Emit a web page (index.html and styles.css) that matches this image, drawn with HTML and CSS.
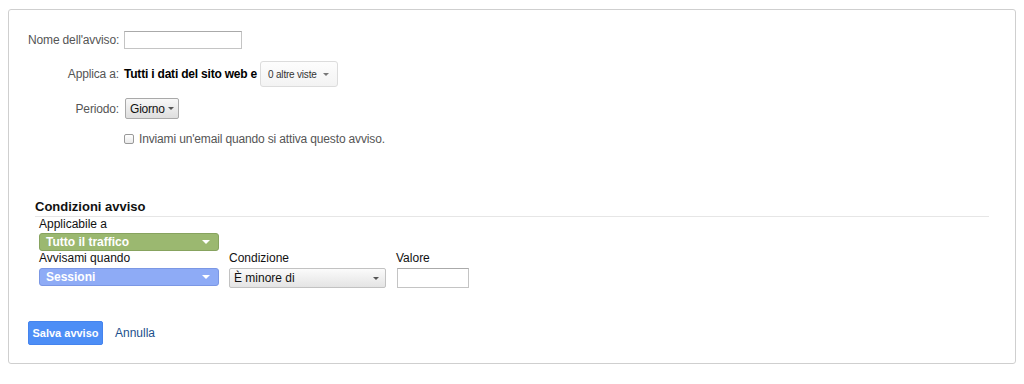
FILE: index.html
```html
<!DOCTYPE html>
<html lang="it">
  <head>
    <meta charset="UTF-8" />
    <meta name="viewport" content="width=device-width, initial-scale=1.0" />
    <title>Nuovo avviso</title>
    <link rel="stylesheet" href="styles.css">
  </head>
  <body>
    <div class="card">
      <div class="form-row row-name">
        <label class="form-label">Nome dell'avviso:</label>
        <input type="text" class="text-box name-box" />
      </div>
      <div class="form-row row-apply">
        <span class="form-label">Applica a:</span>
        <strong class="site-text">Tutti i dati del sito web e</strong>
        <div class="views-btn">
          <span>0 altre viste</span>
          <span class="caret caret-gray"></span>
        </div>
      </div>
      <div class="form-row row-period">
        <span class="form-label">Periodo:</span>
        <div class="period-btn">
          <span>Giorno</span>
          <span class="caret caret-small"></span>
        </div>
      </div>
      <div class="form-row row-mail">
        <span class="form-label"></span>
        <span class="check"></span>
        <span class="mail-text">Inviami un'email quando si attiva questo avviso.</span>
      </div>

      <div class="conditions">
        <h3 class="cond-title">Condizioni avviso</h3>
        <div class="cond-body">
          <div class="cond-label">Applicabile a</div>
          <div class="pill pill-green">
            <span>Tutto il traffico</span>
            <span class="caret caret-white"></span>
          </div>
          <div class="cond-grid">
            <div class="cond-label">Avvisami quando</div>
            <div class="cond-label">Condizione</div>
            <div class="cond-label">Valore</div>
            <div class="pill pill-blue">
              <span>Sessioni</span>
              <span class="caret caret-white"></span>
            </div>
            <div class="select-box">
              <span>È minore di</span>
              <span class="caret caret-dark"></span>
            </div>
            <input type="text" class="text-box value-box" />
          </div>
        </div>
      </div>

      <div class="actions">
        <button class="save-btn">Salva avviso</button>
        <a href="#" class="cancel-link">Annulla</a>
      </div>
    </div>
  </body>
</html>
```

FILE: styles.css
```css
body {
  margin: 9px 8px 0;
  font-family: "Liberation Sans", Arial, sans-serif;
  font-size: 12px;
  color: #222;
  background: #fff;
}

.card {
  border: 1px solid #cfcfcf;
  border-radius: 3px;
  padding: 21px 26px 17px 19px;
  height: 315px;
  box-sizing: content-box;
}

.form-row {
  display: flex;
  align-items: center;
}

.form-label {
  width: 91px;
  text-align: right;
  color: #555;
  margin-right: 5px;
  flex-shrink: 0;
  white-space: nowrap;
  letter-spacing: -0.15px;
}

.row-name {
  height: 18px;
  margin-bottom: 12px;
}

.row-apply {
  height: 26px;
  margin-bottom: 11px;
}

.row-period {
  height: 21px;
  margin-bottom: 12px;
}

.row-mail {
  height: 16px;
}

.text-box {
  box-sizing: border-box;
  border: 1px solid #c4c4c4;
  border-top-color: #aaa;
  margin: 0;
  padding: 2px 4px;
  outline: none;
}

.name-box {
  width: 118px;
  height: 18px;
}

.site-text {
  color: #000;
  font-weight: bold;
  margin-right: 3px;
  letter-spacing: -0.2px;
}

.views-btn {
  display: flex;
  align-items: center;
  justify-content: space-between;
  box-sizing: border-box;
  width: 78px;
  height: 26px;
  padding: 0 8px 0 7px;
  border: 1px solid #dcdcdc;
  border-radius: 3px;
  background: linear-gradient(#fdfdfd, #f3f3f3);
  font-size: 10px;
  letter-spacing: -0.2px;
  color: #333;
}

.period-btn {
  display: flex;
  align-items: center;
  box-sizing: border-box;
  height: 21px;
  margin-left: 1px;
  padding: 0 4px 0 4px;
  border: 1px solid #a9a9a9;
  border-radius: 2px;
  background: linear-gradient(#f8f8f8, #dedede);
  color: #111;
  letter-spacing: -0.2px;
}

.period-btn .caret {
  margin-left: 3px;
}

.caret {
  display: inline-block;
  width: 0;
  height: 0;
  border-left: 4px solid transparent;
  border-right: 4px solid transparent;
  border-top: 4px solid #fff;
}

.caret-gray {
  border-top-color: #777;
  border-left-width: 3px;
  border-right-width: 3px;
  border-top-width: 3px;
}

.caret-small {
  border-top-color: #555;
  border-left-width: 3px;
  border-right-width: 3px;
  border-top-width: 3px;
}

.caret-dark {
  border-top-color: #555;
  border-left-width: 3px;
  border-right-width: 3px;
  border-top-width: 3px;
}

.check {
  display: inline-block;
  box-sizing: border-box;
  width: 10px;
  height: 10px;
  border: 1px solid #999;
  border-radius: 2px;
  background: linear-gradient(#fff, #eaeaea);
  margin-right: 5px;
}

.mail-text {
  color: #555;
  letter-spacing: -0.15px;
}

.conditions {
  margin-top: 52px;
  padding-left: 7px;
}

.cond-title {
  margin: 0;
  font-size: 13px;
  line-height: 16px;
  font-weight: bold;
  color: #111;
  padding-bottom: 1px;
  border-bottom: 1px solid #e6e6e6;
}

.cond-body {
  padding-left: 4px;
}

.cond-label {
  color: #111;
  line-height: 14px;
  height: 14px;
}

.cond-grid {
  display: grid;
  grid-template-columns: 180px 157px 72px;
  column-gap: 10px;
  row-gap: 3px;
  align-items: start;
}

.cond-grid .value-box {
  margin-left: 1px;
}

.pill {
  display: flex;
  align-items: center;
  justify-content: space-between;
  box-sizing: border-box;
  width: 180px;
  height: 18px;
  margin-top: 2px;
  padding: 0 8px 0 6px;
  border-radius: 3px;
  color: #fff;
  font-weight: bold;
}

.pill-green {
  background: #9bb870;
  border: 1px solid #87a35f;
}

.pill-blue {
  background: #8eabf6;
  border: 1px solid #7b97e4;
  margin-top: 0;
}

.select-box {
  display: flex;
  align-items: center;
  justify-content: space-between;
  box-sizing: border-box;
  width: 157px;
  height: 20px;
  padding: 0 6px 0 4px;
  border: 1px solid #c2c2c2;
  border-radius: 2px;
  background: linear-gradient(#fbfbfb, #e4e4e4);
  color: #111;
}

.value-box {
  width: 72px;
  height: 20px;
}

.actions {
  display: flex;
  align-items: center;
  margin-top: 33px;
}

.save-btn {
  width: 75px;
  height: 24px;
  border: 1px solid #4584ee;
  border-radius: 2px;
  background: #4d8ef6;
  color: #fff;
  font-family: "Liberation Sans", Arial, sans-serif;
  font-size: 11px;
  font-weight: bold;
  padding: 0;
}

.cancel-link {
  margin-left: 12px;
  color: #1c4f8c;
  text-decoration: none;
}
```
